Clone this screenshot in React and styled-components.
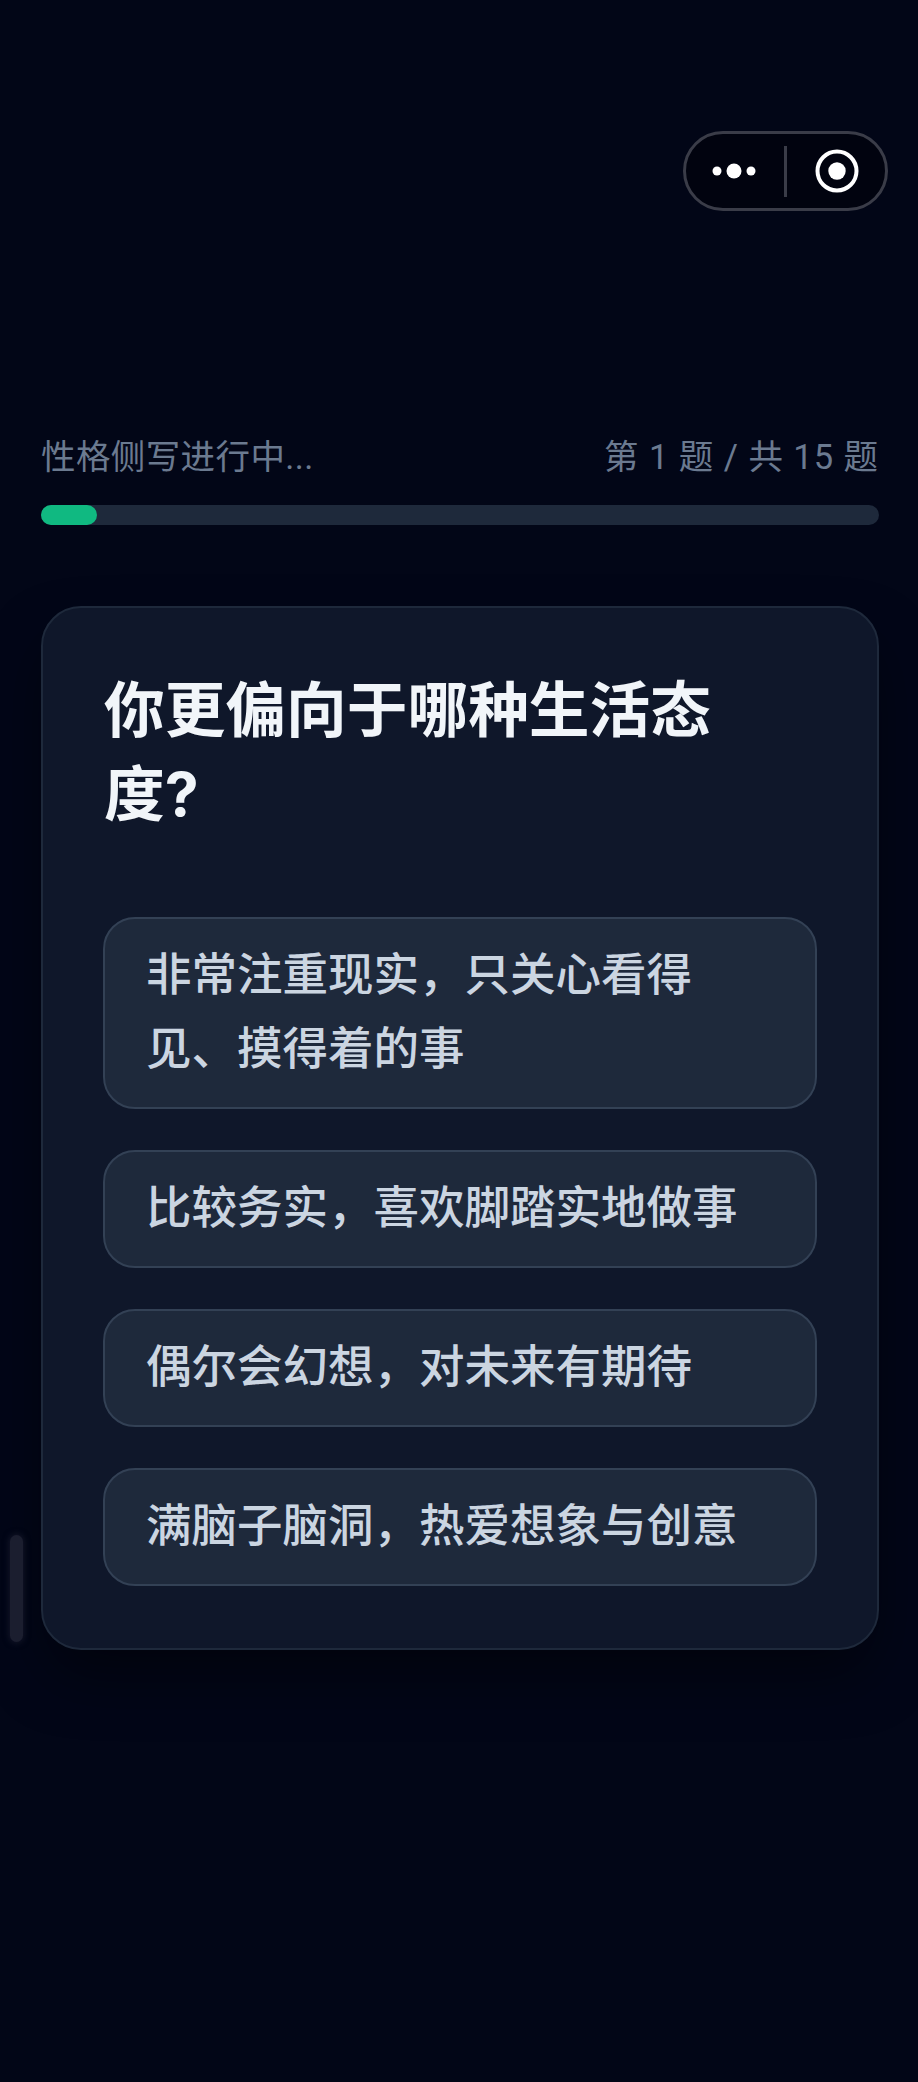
import styled, { createGlobalStyle } from "styled-components";

const GlobalStyle = createGlobalStyle`
  html, body {
    margin: 0;
    padding: 0;
    background: #020617;
  }
  * {
    box-sizing: border-box;
  }
`;

const Page = styled.div`
  position: relative;
  width: 918px;
  height: 2082px;
  overflow: hidden;
  padding: 429px 39px 0 41px;
  background: #020617;
  font-family: Roboto, "Noto Sans CJK SC", sans-serif;
`;

const Capsule = styled.div`
  position: absolute;
  top: 131px;
  left: 683px;
  display: flex;
  align-items: center;
  width: 205px;
  height: 80px;
  border: 3px solid #3a3c48;
  border-radius: 40px;
  background: #01030f;
`;

const CapsuleSide = styled.div`
  flex: 1;
  display: flex;
  align-items: center;
  justify-content: center;
  padding: ${(props) => (props.$left ? "0 3px 0 0" : "0 0 0 3px")};
`;

const CapsuleDivider = styled.div`
  width: 3px;
  height: 51px;
  background: #3a3c48;
`;

const ScrollThumb = styled.div`
  position: absolute;
  top: 1535px;
  left: 10px;
  width: 13px;
  height: 107px;
  border-radius: 7px;
  background: #1b1e2f;
  box-shadow: 0 0 6px 1px rgba(40, 40, 60, 0.5);
`;

const ProgressHead = styled.div`
  display: flex;
  align-items: center;
  justify-content: space-between;
  height: 50px;
  font-size: 34.5px;
  color: #6b7a90;
`;

const Label = styled.span`
  letter-spacing: 0.4px;
`;

const Count = styled.span`
  letter-spacing: 0.95px;
`;

const Track = styled.div`
  height: 20px;
  margin-top: 26px;
  border-radius: 10px;
  background: #1e293b;
`;

const Fill = styled.div`
  height: 100%;
  border-radius: 10px;
  background: #10b981;
`;

const Card = styled.div`
  margin-top: 81px;
  padding: 60px 60px 62px;
  border: 2px solid #1e293b;
  border-radius: 40px;
  background: #0f172a;
  box-shadow: 0 30px 60px -10px rgba(0, 0, 0, 0.5);
`;

const Title = styled.h1`
  margin: 0 0 81px;
  padding: 0 40px 0 1px;
  font-family: Inter, "Noto Sans CJK SC", sans-serif;
  font-size: 60.7px;
  font-weight: 700;
  line-height: 84px;
  color: #f1f5f9;
`;

const Options = styled.div`
  display: flex;
  flex-direction: column;
  gap: 41px;
`;

const Option = styled.div`
  padding: 20px 41px;
  border: 2px solid #334155;
  border-radius: 32px;
  background: #1e293b;
  font-size: 45.5px;
  font-weight: 500;
  line-height: 74px;
  color: #cbd5e1;
`;

const options = [
  "非常注重现实，只关心看得见、摸得着的事",
  "比较务实，喜欢脚踏实地做事",
  "偶尔会幻想，对未来有期待",
  "满脑子脑洞，热爱想象与创意",
];

const App = () => {
  const progress = (1 / 15) * 100;

  return (
    <>
      <GlobalStyle />
      <Page>
        <Capsule>
          <CapsuleSide $left>
            <svg width="50" height="20" viewBox="0 0 50 20">
              <circle cx="8" cy="10" r="4.5" fill="#fff" />
              <circle cx="25" cy="10" r="7.5" fill="#fff" />
              <circle cx="42" cy="10" r="4.5" fill="#fff" />
            </svg>
          </CapsuleSide>
          <CapsuleDivider />
          <CapsuleSide>
            <svg width="44" height="44" viewBox="1 0 44 44" overflow="visible">
              <circle cx="22" cy="22" r="19.5" fill="none" stroke="#fff" strokeWidth="4" />
              <circle cx="22" cy="22" r="8.7" fill="#fff" />
            </svg>
          </CapsuleSide>
        </Capsule>
        <ScrollThumb />

        <ProgressHead>
          <Label>性格侧写进行中...</Label>
          <Count>第 1 题 / 共 15 题</Count>
        </ProgressHead>
        <Track>
          <Fill style={{ width: `${progress}%` }} />
        </Track>

        <Card>
          <Title>你更偏向于哪种生活态度?</Title>
          <Options>
            {options.map((text) => (
              <Option key={text}>{text}</Option>
            ))}
          </Options>
        </Card>
      </Page>
    </>
  );
};

export default App;
